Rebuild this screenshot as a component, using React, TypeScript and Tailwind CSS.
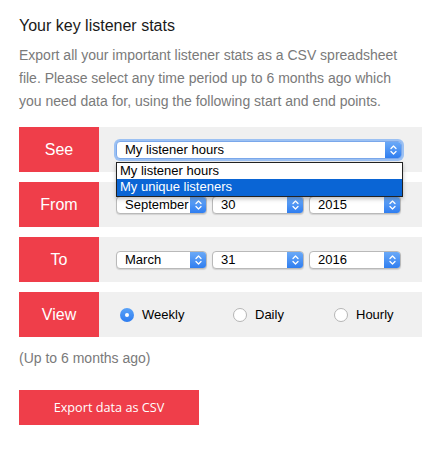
import React from "react";

const Chevrons = () => (
  <svg width="7" height="10" viewBox="0 0 7 10" fill="none" stroke="white" strokeWidth="1.3" strokeLinecap="round" strokeLinejoin="round">
    <path d="M1 3.5 L3.5 1 L6 3.5" />
    <path d="M1 6.5 L3.5 9 L6 6.5" />
  </svg>
);

function FakeSelect({ value, className = "", focused = false }: { value: string; className?: string; focused?: boolean }) {
  return (
    <div
      className={`flex h-[18px] items-stretch overflow-hidden rounded-[4px] bg-white ${
        focused ? "border border-[#7aa7ea] shadow-[0_0_0_2px_#9cc1f3]" : "border border-[#b9b9b9] shadow-[0_1px_1px_rgba(0,0,0,0.12)]"
      } ${className}`}
    >
      <div className="flex-1 overflow-hidden whitespace-nowrap pl-[8px] text-[13px] leading-[16px] text-black">{value}</div>
      <div className="flex w-[16px] items-center justify-center bg-gradient-to-b from-[#6aa9f7] to-[#2f7ef0]">
        <Chevrons />
      </div>
    </div>
  );
}

function Row({ label, children }: { label: string; children: React.ReactNode }) {
  return (
    <div className="flex h-[45px]">
      <div className="flex w-[80px] items-center justify-center bg-[#ef3e4a] text-[16px] text-white">{label}</div>
      <div className="relative flex flex-1 items-center bg-[#f0f0f0] pl-[17px] pr-[18px]">{children}</div>
    </div>
  );
}

function Radio({ checked, label }: { checked?: boolean; label: string }) {
  return (
    <div className="flex items-center gap-[8px]">
      {checked ? (
        <div className="flex h-[14px] w-[14px] items-center justify-center rounded-full bg-gradient-to-b from-[#5aa2f7] to-[#2d7cf0]">
          <div className="h-[4px] w-[4px] rounded-full bg-white" />
        </div>
      ) : (
        <div className="h-[14px] w-[14px] rounded-full border border-[#b5b5b5] bg-white" />
      )}
      <span className="text-[13px] text-black">{label}</span>
    </div>
  );
}

export default function App() {
  return (
    <div className="w-[441px] h-[450px] bg-white px-[19px] pt-[13px]" style={{ fontFamily: '"Liberation Sans", Arial, sans-serif' }}>
      <h1 className="mt-[2px] text-[16px] leading-[22px] text-[#1a1a1a]">Your key listener stats</h1>
      <p className="mt-[7px] text-[14px] leading-[23px] text-[#7a7a7a]">
        Export all your important listener stats as a CSV spreadsheet
        <br />
        file. Please select any time period up to 6 months ago which
        <br />
        you need data for, using the following start and end points.
      </p>
      <div className="mt-[14px] flex flex-col gap-[10px]">
        <Row label="See">
          <FakeSelect value="My listener hours" className="w-[286px]" focused />
          <div className="absolute left-[17px] top-[35px] z-10 w-[287px] border border-[#222] bg-white text-[13px] leading-[16px] text-black shadow-[0_2px_4px_rgba(0,0,0,0.25)]">
            <div className="h-[16px] pl-[3px]">My listener hours</div>
            <div className="h-[17px] bg-[#0a65d5] pl-[3px] text-white">My unique listeners</div>
          </div>
        </Row>
        <Row label="From">
          <div className="flex gap-[5px]">
            <FakeSelect value="September" className="w-[91px]" />
            <FakeSelect value="30" className="w-[92px]" />
            <FakeSelect value="2015" className="w-[92px]" />
          </div>
        </Row>
        <Row label="To">
          <div className="flex gap-[5px]">
            <FakeSelect value="March" className="w-[91px]" />
            <FakeSelect value="31" className="w-[92px]" />
            <FakeSelect value="2016" className="w-[92px]" />
          </div>
        </Row>
        <Row label="View">
          <div className="flex w-full pl-[4px]">
            <div className="w-[113px]"><Radio checked label="Weekly" /></div>
            <div className="w-[101px]"><Radio label="Daily" /></div>
            <Radio label="Hourly" />
          </div>
        </Row>
      </div>
      <p className="mt-[11px] text-[14px] leading-[20px] text-[#7a7a7a]">(Up to 6 months ago)</p>
      <button className="mt-[22px] flex h-[35px] w-[180px] items-center justify-center bg-[#ef3e4a] text-[12.7px] text-white" style={{ fontFamily: '"Open Sans", sans-serif' }}>
        Export data as CSV
      </button>
    </div>
  );
}
